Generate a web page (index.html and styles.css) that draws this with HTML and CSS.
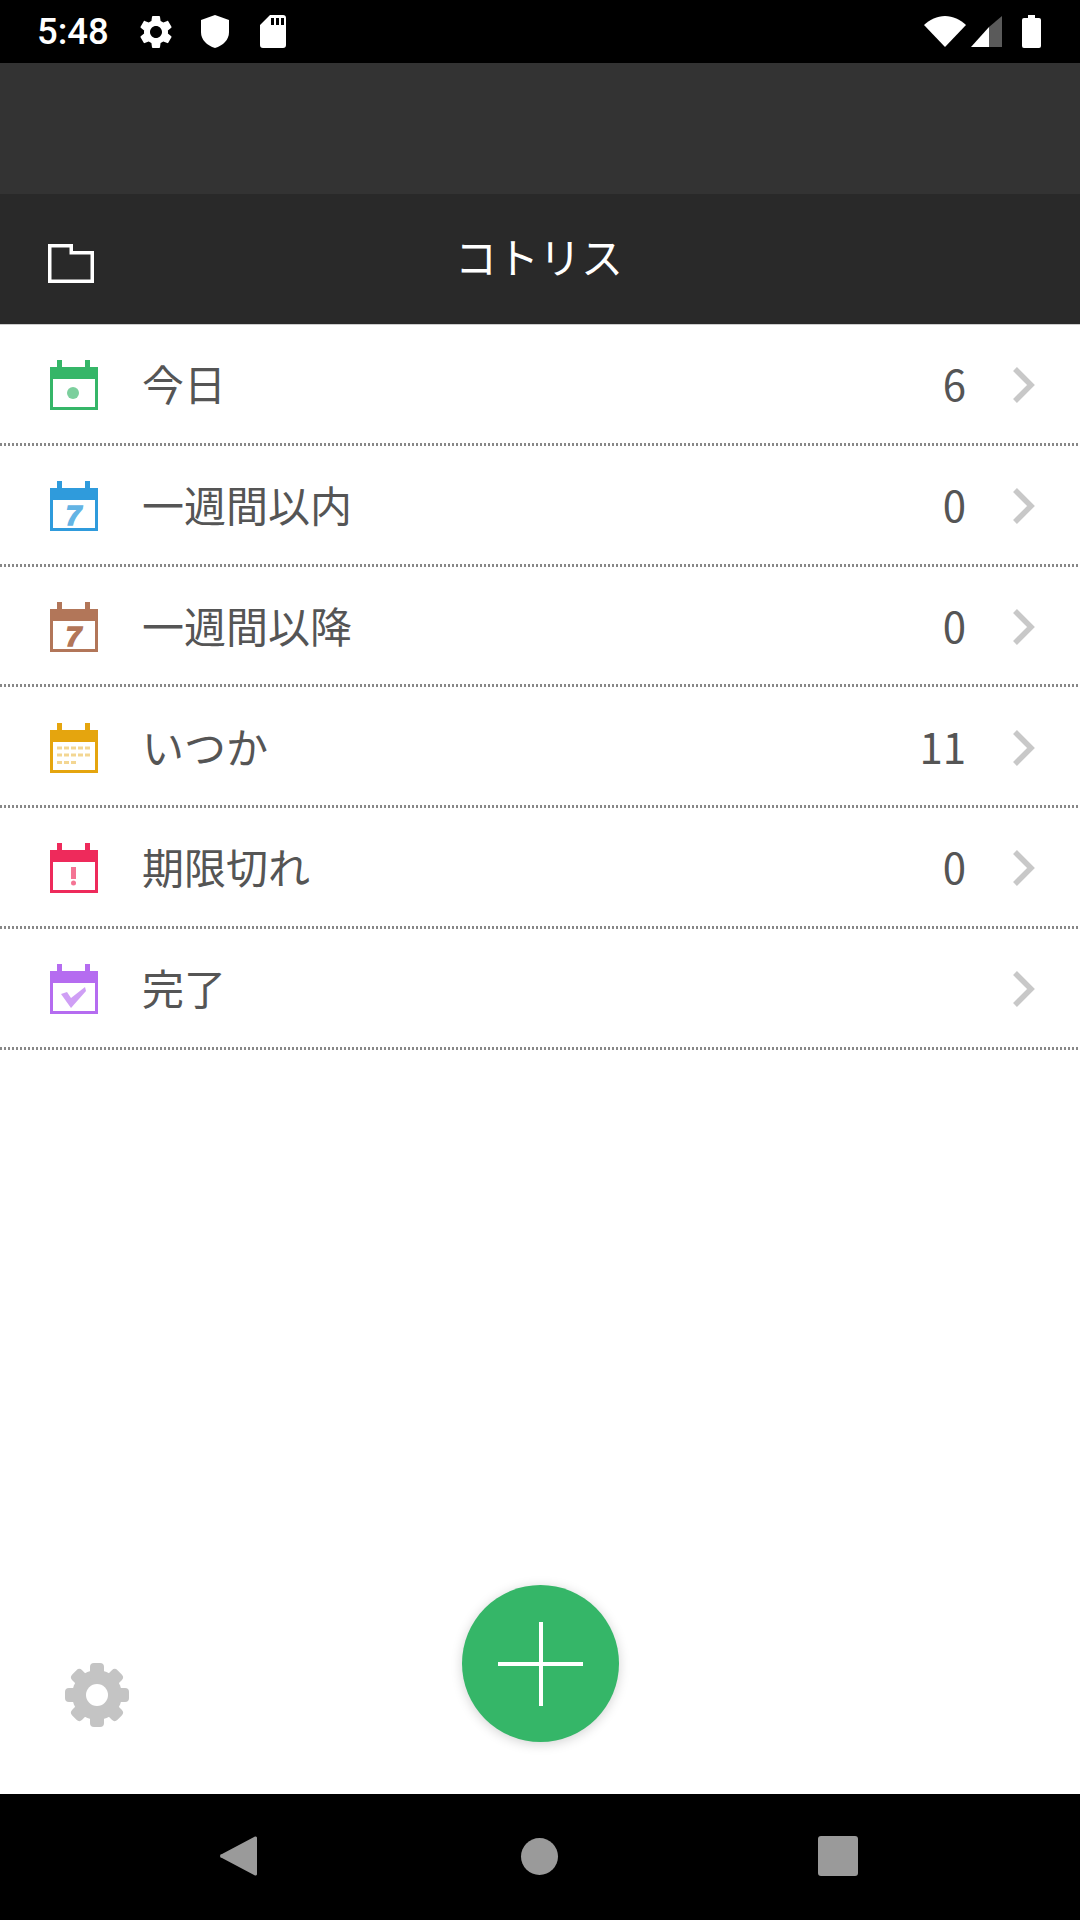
FILE: index.html
```html
<html lang="ja"><head>
    <meta charset="UTF-8">
    <meta name="viewport" content="width=device-width, initial-scale=1.0">
    <title>コトリス</title>
    <link rel="stylesheet" href="styles.css">
</head>
<body>
    <svg class="defs" width="0" height="0">
        <symbol id="cal" viewBox="0 0 48 50">
            <rect x="7" y="0" width="5" height="9"/>
            <rect x="35" y="0" width="5" height="9"/>
            <rect x="0" y="7" width="48" height="12"/>
            <path d="M0 18h3v29h42v-29h3v32h-48z"/>
        </symbol>
        <symbol id="chevron" viewBox="0 0 24 38">
            <path d="M4 3l16 16l-16 16" fill="none" stroke="#c8c8c8" stroke-width="5.5"/>
        </symbol>
    </svg>

    <div class="status-bar">
        <span class="time">5:48</span>
        <svg class="st-gear" viewBox="0 0 24 24"><path d="M19.14 12.94c.04-.3.06-.61.06-.94 0-.32-.02-.64-.07-.94l2.03-1.58c.18-.14.23-.41.12-.61l-1.92-3.32c-.12-.22-.37-.29-.59-.22l-2.39.96c-.5-.38-1.03-.7-1.62-.94l-.36-2.54c-.04-.24-.24-.41-.48-.41h-3.84c-.24 0-.43.17-.47.41l-.36 2.54c-.59.24-1.13.57-1.62.94l-2.39-.96c-.22-.08-.47 0-.59.22L2.74 8.87c-.12.21-.08.47.12.61l2.03 1.58c-.05.3-.09.63-.09.94s.02.64.07.94l-2.03 1.58c-.18.14-.23.41-.12.61l1.92 3.32c.12.22.37.29.59.22l2.39-.96c.5.38 1.03.7 1.62.94l.36 2.54c.05.24.24.41.48.41h3.84c.24 0 .44-.17.47-.41l.36-2.54c.59-.24 1.13-.56 1.62-.94l2.39.96c.22.08.47 0 .59-.22l1.92-3.32c.12-.22.07-.47-.12-.61l-2.01-1.58zM12 15.6c-1.98 0-3.6-1.62-3.6-3.6s1.62-3.6 3.6-3.6 3.6 1.62 3.6 3.6-1.62 3.6-3.6 3.6z"/></svg>
        <svg class="st-shield" viewBox="0 0 28 33"><path d="M14 0L28 5v12c0 8-6 13.500-14 16C6 30.500 0 25 0 17V5z"/></svg>
        <svg class="st-sd" viewBox="0 0 26 33"><path d="M10 0h13a3 3 0 0 1 3 3v27a3 3 0 0 1-3 3H3a3 3 0 0 1-3-3V10zM11 3v7h3V3zM16 3v7h3V3zM21 3v7h3V3z" fill-rule="evenodd"/></svg>
        <span class="st-right">
            <svg class="st-wifi" viewBox="0 0 42 31"><path d="M0 9C6 3.500 13 0 21 0s15 3.500 21 9L21 31z"/></svg>
            <svg class="st-signal" viewBox="0 0 31 31"><path d="M31 0v31H18V11z" fill="#5a5a5a"/><path d="M18 11v20H0z"/></svg>
            <svg class="st-battery" viewBox="0 0 19 33"><path d="M6 0h7v3h4a2 2 0 0 1 2 2v26a2 2 0 0 1-2 2H2a2 2 0 0 1-2-2V5a2 2 0 0 1 2-2h4z"/></svg>
        </span>
    </div>

    <div class="banner"></div>

    <div class="header">
        <svg class="folder" viewBox="0 0 46 39"><path d="M1.750 1.750h21.500v7h21v28.500h-42.500z" fill="none" stroke="#fff" stroke-width="3.500"/></svg>
        <h1 class="title">コトリス</h1>
    </div>

    <div class="list">
        <div class="row green">
            <svg class="cal"><use href="#cal"/><circle class="mark" cx="23" cy="33" r="6"/></svg>
            <span class="label">今日</span>
            <span class="count">6</span>
            <svg class="chevron"><use href="#chevron"/></svg>
        </div>
        <div class="row blue">
            <svg class="cal"><use href="#cal"/><text class="seven" x="23.500" y="44" text-anchor="middle">7</text></svg>
            <span class="label">一週間以内</span>
            <span class="count">0</span>
            <svg class="chevron"><use href="#chevron"/></svg>
        </div>
        <div class="row brown">
            <svg class="cal"><use href="#cal"/><text class="seven" x="23.500" y="44" text-anchor="middle">7</text></svg>
            <span class="label">一週間以降</span>
            <span class="count">0</span>
            <svg class="chevron"><use href="#chevron"/></svg>
        </div>
        <div class="row yellow">
            <svg class="cal">
                <use href="#cal"/>
                <path class="dashes" d="M7 25h33M7 32h33M7 39.500h19"/>
            </svg>
            <span class="label">いつか</span>
            <span class="count">11</span>
            <svg class="chevron"><use href="#chevron"/></svg>
        </div>
        <div class="row red">
            <svg class="cal"><use href="#cal"/><rect class="mark" x="21" y="24" width="5" height="12"/><circle class="mark" cx="23.500" cy="40" r="2.500"/></svg>
            <span class="label">期限切れ</span>
            <span class="count">0</span>
            <svg class="chevron"><use href="#chevron"/></svg>
        </div>
        <div class="row purple">
            <svg class="cal"><use href="#cal"/><path class="mark" d="M11 30l6-2l4 6l14-11l1 4l-15 17z"/></svg>
            <span class="label">完了</span>
            <span class="count"></span>
            <svg class="chevron"><use href="#chevron"/></svg>
        </div>
    </div>

    <div class="bottom">
        <svg class="settings" viewBox="0 0 66 66">
            <g fill="#c4c4c4">
                <circle cx="33" cy="33" r="25"/>
                <rect x="26" y="1" width="14" height="64" rx="4"/>
                <rect x="26" y="1" width="14" height="64" rx="4" transform="rotate(45 33 33)"/>
                <rect x="26" y="1" width="14" height="64" rx="4" transform="rotate(90 33 33)"/>
                <rect x="26" y="1" width="14" height="64" rx="4" transform="rotate(135 33 33)"/>
            </g>
            <circle cx="33" cy="33" r="11" fill="#fff"/>
        </svg>
        <button class="fab"><span class="plus-h"></span><span class="plus-v"></span></button>
    </div>

    <div class="nav-bar">
        <svg class="nav-back" viewBox="0 0 37 42"><path d="M35 1.500L2 19a2 2 0 0 0 0 4L35 40.500a1.500 1.500 0 0 0 2-1.500V3a1.500 1.500 0 0 0-2-1.500z"/></svg>
        <span class="nav-home"></span>
        <span class="nav-recent"></span>
    </div>
</body></html>
```

FILE: styles.css
```css
html, body {
    margin: 0;
    padding: 0;
}
body {
    width: 1080px;
    height: 1920px;
    display: flex;
    flex-direction: column;
    overflow: hidden;
    background-color: #fff;
    font-family: "Noto Sans CJK JP", "Noto Sans", sans-serif;
}
.defs {
    display: block;
    height: 0;
}

/* status bar */
.status-bar {
    height: 63px;
    flex-shrink: 0;
    display: flex;
    align-items: center;
    padding-left: 37px;
    background-color: #000;
    color: #fff;
}
.status-bar svg {
    fill: #fff;
    display: block;
}
.time {
    width: 99px;
    font-family: Roboto, sans-serif;
    font-size: 36.500px;
    font-weight: 500;
}
.st-gear {
    width: 40px;
    height: 40px;
}
.st-shield {
    width: 28px;
    height: 33px;
    margin-left: 25px;
}
.st-sd {
    width: 26px;
    height: 33px;
    margin-left: 31px;
}
.st-right {
    margin-left: auto;
    padding-right: 39px;
    display: flex;
    align-items: center;
}
.st-wifi {
    width: 42px;
    height: 31px;
}
.st-signal {
    width: 31px;
    height: 31px;
    margin-left: 5px;
}
.st-battery {
    width: 19px;
    height: 33px;
    margin-left: 20px;
}

/* app header */
.banner {
    height: 131px;
    flex-shrink: 0;
    background-color: #333;
}
.header {
    height: 131px;
    flex-shrink: 0;
    display: flex;
    align-items: center;
    justify-content: center;
    position: relative;
    background-color: #292929;
    border-bottom: 1px solid #ccc;
    box-sizing: border-box;
}
.folder {
    position: absolute;
    left: 48px;
    top: 50px;
    width: 46px;
    height: 39px;
}
.title {
    margin: 0;
    padding-bottom: 7px;
    padding-right: 2px;
    font-size: 42px;
    font-weight: 400;
    color: #fff;
}

/* list */
.list {
    flex-shrink: 0;
}
.row {
    height: 120.750px;
    box-sizing: border-box;
    display: flex;
    align-items: center;
    padding: 0 45px 3px 49.500px;
    color: #555;
    background-image: repeating-linear-gradient(90deg, #888 0, #888 2.500px, transparent 2.500px, transparent 4px);
    background-size: 100% 3px;
    background-position: left bottom;
    background-repeat: no-repeat;
}
.cal {
    width: 48px;
    height: 50px;
    flex-shrink: 0;
    margin-top: 3px;
    overflow: visible;
}
.label {
    flex: 1;
    margin-left: 44.500px;
    padding-bottom: 2px;
    font-size: 42px;
    font-weight: 400;
}
.count {
    padding-bottom: 2px;
    font-size: 42px;
    margin-right: 45px;
}
.chevron {
    width: 24px;
    height: 38px;
    margin-top: 3px;
}
.green .cal { color: #35b668; fill: #35b668; }
.blue .cal { color: #2f9bdc; fill: #2f9bdc; }
.brown .cal { color: #b27659; fill: #b27659; }
.yellow .cal { color: #e5a50e; fill: #e5a50e; }
.red .cal { color: #ee2a5b; fill: #ee2a5b; }
.purple .cal { color: #b56cf0; fill: #b56cf0; }
.mark,
.seven {
    opacity: 0.65;
}
.seven {
    font-family: "Liberation Sans", sans-serif;
    font-size: 28px;
    font-weight: 700;
    font-style: italic;
    stroke: currentColor;
    stroke-width: 1.500;
}
.blue .seven {
    opacity: 0.75;
}
.brown .seven {
    opacity: 1;
}
.dashes {
    fill: none;
    stroke: #e5a50e;
    stroke-width: 3;
    stroke-dasharray: 5 2;
    opacity: 0.45;
}

/* bottom area */
.bottom {
    margin-top: auto;
    height: 209px;
    flex-shrink: 0;
    display: flex;
    padding-left: 64px;
    box-sizing: border-box;
}
.settings {
    width: 66px;
    height: 66px;
    margin-top: 77px;
}
.fab {
    width: 157px;
    height: 157px;
    margin-left: 332px;
    padding: 0;
    border: none;
    border-radius: 50%;
    background-color: #35b668;
    box-shadow: 0 2px 12px rgba(0, 0, 0, 0.18);
    position: relative;
}
.plus-h {
    position: absolute;
    left: 36px;
    top: 77px;
    width: 85px;
    height: 4px;
    background-color: #fff;
}
.plus-v {
    position: absolute;
    left: 77px;
    top: 37px;
    width: 4px;
    height: 84px;
    background-color: #fff;
}

/* navigation bar */
.nav-bar {
    height: 126px;
    flex-shrink: 0;
    display: flex;
    align-items: center;
    padding: 0 0 2px 220px;
    box-sizing: border-box;
    background-color: #000;
}
.nav-back {
    width: 37px;
    height: 42px;
    fill: #9a9a9a;
}
.nav-home {
    width: 37px;
    height: 37px;
    margin-left: 264px;
    border-radius: 50%;
    background-color: #9a9a9a;
}
.nav-recent {
    width: 40px;
    height: 40px;
    margin-left: 260px;
    border-radius: 3px;
    background-color: #9a9a9a;
}
```
